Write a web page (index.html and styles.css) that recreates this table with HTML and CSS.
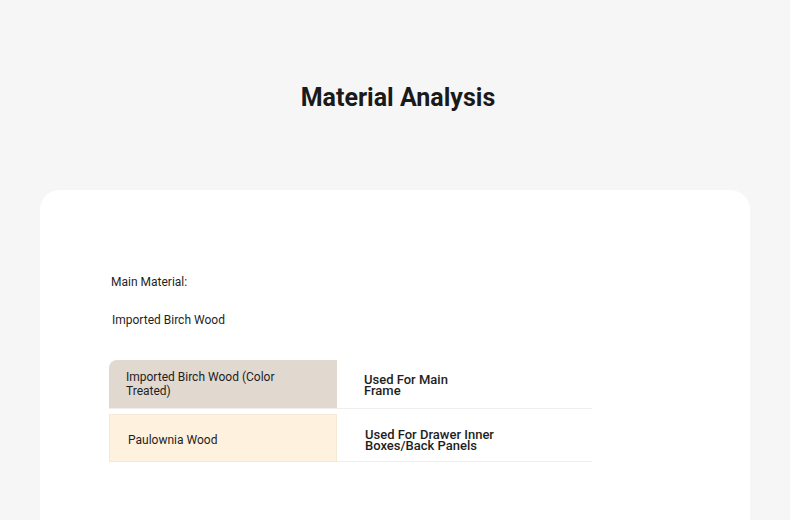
FILE: index.html
```html
<!DOCTYPE html>
<html lang="en">
<head>
<meta charset="utf-8">
<title>Material Analysis</title>
<link rel="stylesheet" href="styles.css">
</head>
<body>
<header class="header">
  <h1 class="title">Material Analysis</h1>
</header>
<section class="card">
  <div class="summary">
    <div class="label">Main Material:</div>
    <div class="value">Imported Birch Wood</div>
  </div>
  <div class="table">
    <div class="row">
      <div class="cell-name name-birch">Imported Birch Wood (Color Treated)</div>
      <div class="cell-use"><span class="use-text">Used For Main<br>Frame</span></div>
    </div>
    <div class="row">
      <div class="cell-name name-paulownia">Paulownia Wood</div>
      <div class="cell-use cell-use-second"><span class="use-text">Used For Drawer Inner<br>Boxes/Back Panels</span></div>
    </div>
  </div>
</section>
</body>
</html>
```
FILE: styles.css
```css
* { box-sizing: border-box; }
html, body {
  margin: 0;
  padding: 0;
  background: #f6f6f6;
  font-family: Roboto, "Liberation Sans", Arial, sans-serif;
  color: #222;
  overflow: hidden;
}
.header {
  height: 190px;
  padding-top: 83px;
  text-align: center;
}
.title {
  margin: 0;
  font-size: 25px;
  line-height: 30px;
  font-weight: 700;
  color: #1a1a1a;
  padding-left: 6px;
}
.card {
  margin: 0 40px;
  min-height: 360px;
  background: #ffffff;
  border-radius: 20px;
  padding: 84px 0 40px 69px;
}
.label {
  font-size: 12px;
  line-height: 16px;
  padding-left: 2px;
  color: #1f1f1f;
}
.value {
  margin-top: 22px;
  font-size: 12px;
  line-height: 16px;
  padding-left: 3px;
  color: #1f1f1f;
}
.table {
  margin-top: 32px;
  width: 483px;
  display: flex;
  flex-direction: column;
  gap: 5px;
}
.row {
  display: flex;
  border-bottom: 1px solid #eeeeee;
}
.cell-name {
  width: 228px;
  height: 48px;
  display: flex;
  align-items: center;
  font-size: 12px;
  line-height: 14px;
  color: #241e1b;
}
.name-birch {
  background: #e1d8d0;
  border-top-left-radius: 8px;
  padding: 0 30px 0 17px;
}
.name-paulownia {
  background: #fef1de;
  border: 1px solid #f4e8d6;
  padding: 4px 20px 0 18px;
  margin-bottom: -1px;
}
.cell-use {
  flex: 1;
  display: flex;
  align-items: center;
  padding-left: 27px;
  padding-top: 2px;
}
.cell-use-second {
  padding-left: 28px;
  padding-top: 4px;
}
.use-text {
  font-size: 13px;
  line-height: 11px;
  font-weight: 500;
  color: #1e1e1e;
}
```
